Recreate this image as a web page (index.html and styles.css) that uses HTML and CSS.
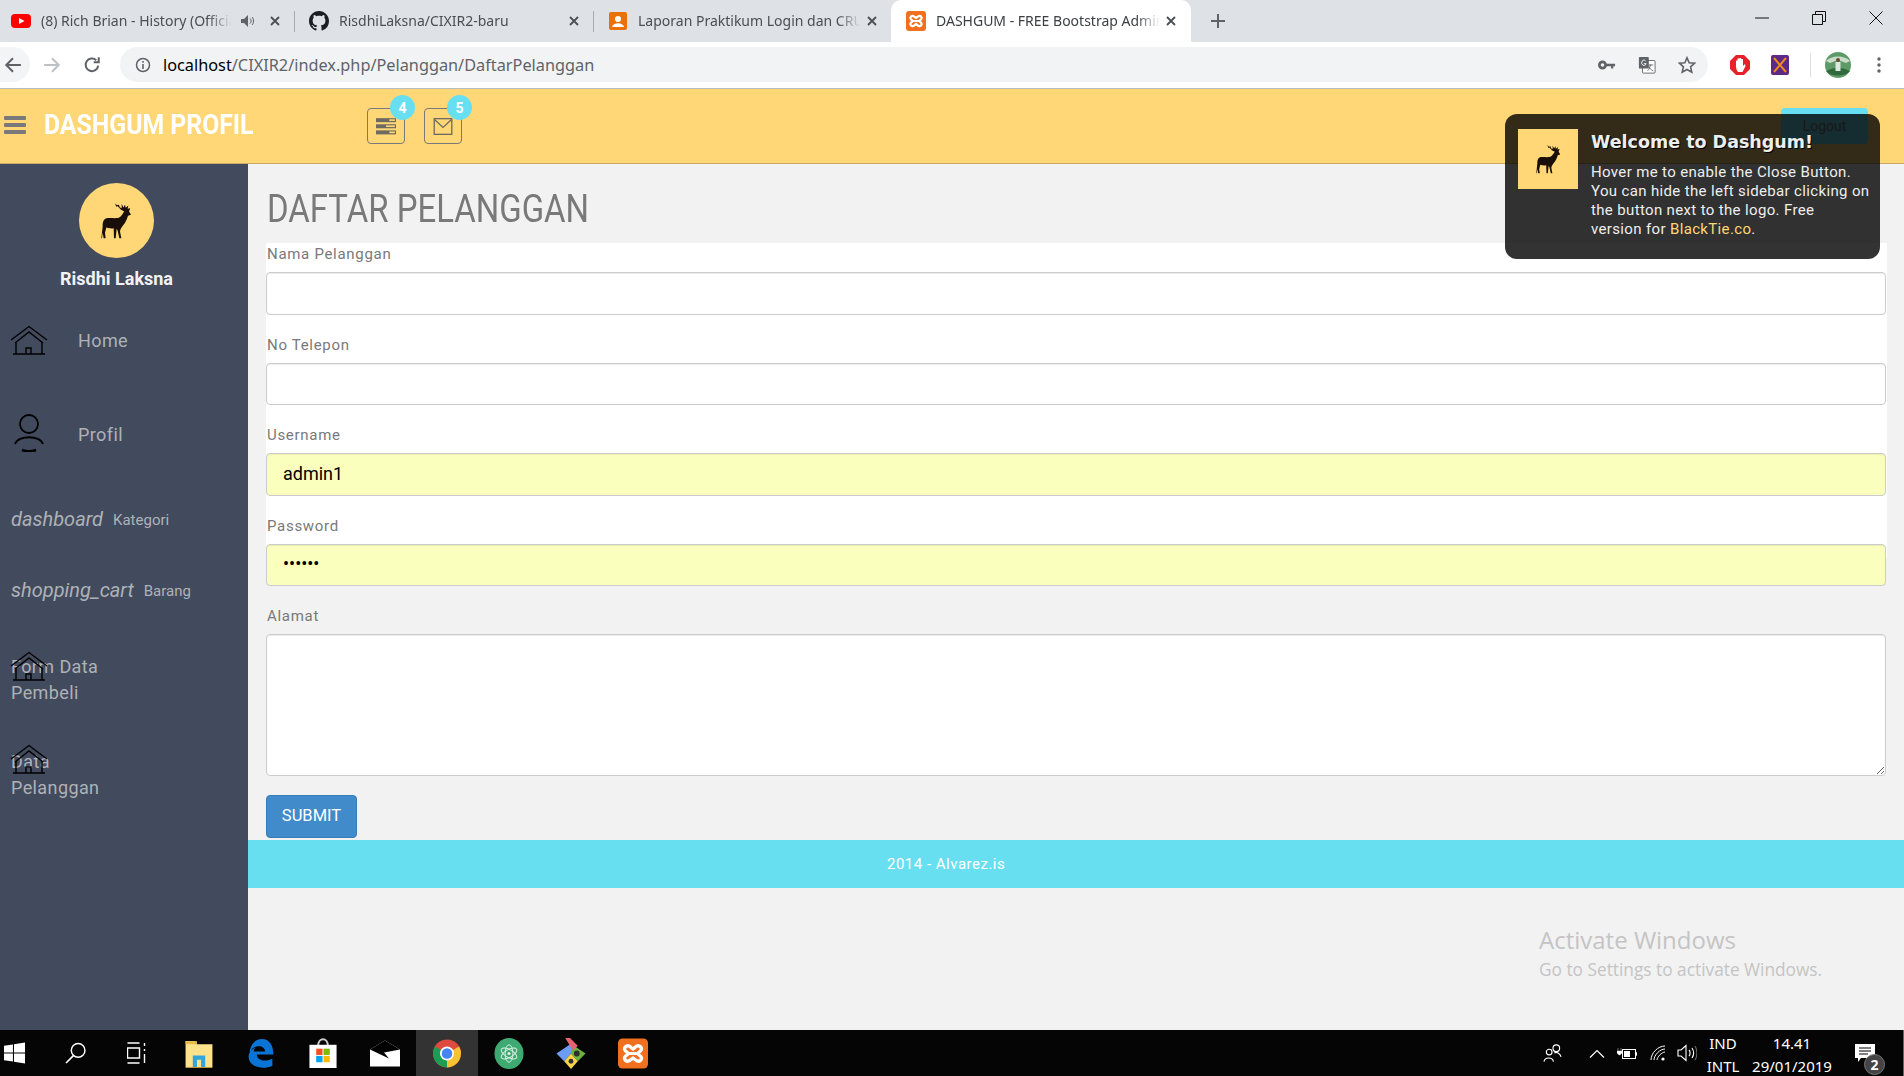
FILE: index.html
```html
<!DOCTYPE html>
<html lang="id">
<head>
    <meta charset="UTF-8">
    <title>DASHGUM - FREE Bootstrap Admin Template</title>
    <link rel="stylesheet" href="styles.css">
</head>
<body>
    <svg class="defs" width="0" height="0">
        <symbol id="deer" viewBox="0 0 93 110">
            <path d="M5 72C4 60 8 50 17 48C32 46 48 52 58 44C64 38 66 32 70 28L60 23L50 12L46 14L42 3L48 9L54 8L56 15L62 18L62 5L67 16L72 8L74 17L82 10L80 20L88 18L84 27L90 38L81 41C78 50 74 62 66 70C60 78 58 82 57 88L61 108H55L50 86L47 80L44 108H39L38 78C30 80 22 78 16 76L12 92L14 108H8L5 92L3 108H1Z" fill="#1a0e08"/>
        </symbol>
        <symbol id="house" viewBox="0 0 38 30">
            <path d="M1 15L19 1.500L37 15M5 18L19 7L33 18M6 17V29H32V17M3 29H35M16 29V23H21V29" fill="none" stroke="#000" stroke-width="1.400"/>
        </symbol>
        <symbol id="xampp" viewBox="0 0 20 20">
            <rect width="20" height="20" rx="3" fill="#f0701f"/>
            <path d="M5 5.500C7 3.500 8.500 6 10 7C11.500 6 13 3.500 15 5.500C17 7.500 14 9 13 10C14 11 17 12.500 15 14.500C13 16.500 11.500 14 10 13C8.500 14 7 16.500 5 14.500C3 12.500 6 11 7 10C6 9 3 7.500 5 5.500Z" fill="none" stroke="#fff" stroke-width="2.200"/>
            <path d="M7 10H13" stroke="#fff" stroke-width="2"/>
        </symbol>
    </svg>

    <!-- browser -->
    <div class="tabstrip">
        <div class="tab tab-first">
            <svg class="favicon" viewBox="0 0 20 20"><rect y="3" width="20" height="14" rx="4" fill="#f00"/><path d="M8 7L13.500 10L8 13Z" fill="#fff"/></svg>
            <span class="tab-title">(8) Rich Brian - History (Official Music Video)</span>
            <svg class="speaker" viewBox="0 0 14 12"><path d="M0 4H3L7 0V12L3 8H0Z" fill="#5f6368"/><path d="M9 3.500C10.500 5 10.500 7 9 8.500M11 2C13 4 13 8 11 10" fill="none" stroke="#5f6368"/></svg>
            <svg class="tab-close" viewBox="0 0 10 10"><path d="M1 1L9 9M9 1L1 9"/></svg>
        </div>
        <div class="tab">
            <svg class="favicon" viewBox="0 0 16 16"><path fill="#1b1f23" d="M8 0C3.580 0 0 3.580 0 8c0 3.540 2.290 6.530 5.470 7.590.4.070.55-.17.55-.38 0-.19-.01-.82-.01-1.490-2.010.37-2.530-.49-2.690-.94-.09-.23-.48-.94-.82-1.130-.28-.15-.68-.52-.01-.53.63-.01 1.080.58 1.230.82.72 1.210 1.870.87 2.330.66.070-.52.28-.87.51-1.070-1.780-.2-3.640-.89-3.640-3.950 0-.87.31-1.590.82-2.150-.08-.2-.36-1.020.08-2.120 0 0 .67-.21 2.200.82.64-.18 1.320-.27 2-.27.68 0 1.360.09 2 .27 1.530-1.040 2.200-.82 2.200-.82.44 1.100.16 1.920.08 2.120.51.56.82 1.270.82 2.150 0 3.070-1.870 3.750-3.650 3.950.29.25.54.73.54 1.480 0 1.070-.01 1.930-.01 2.200 0 .21.15.46.55.38A8.013 8.013 0 0016 8c0-4.420-3.580-8-8-8z"/></svg>
            <span class="tab-title">RisdhiLaksna/CIXIR2-baru</span>
            <svg class="tab-close" viewBox="0 0 10 10"><path d="M1 1L9 9M9 1L1 9"/></svg>
        </div>
        <div class="tab tab-last">
            <svg class="favicon" viewBox="0 0 20 20"><rect x="1" y="1" width="18" height="18" rx="2" fill="#e8710a"/><circle cx="10" cy="8" r="3" fill="#fff"/><path d="M4 16C5 11 15 11 16 16Z" fill="#fff"/></svg>
            <span class="tab-title">Laporan Praktikum Login dan CRUD</span>
            <svg class="tab-close" viewBox="0 0 10 10"><path d="M1 1L9 9M9 1L1 9"/></svg>
        </div>
        <div class="tab tab-active">
            <svg class="favicon"><use href="#xampp"/></svg>
            <span class="tab-title">DASHGUM - FREE Bootstrap Admin Template</span>
            <svg class="tab-close" viewBox="0 0 10 10"><path d="M1 1L9 9M9 1L1 9"/></svg>
        </div>
        <svg class="new-tab" viewBox="0 0 14 14"><path d="M7 0V14M0 7H14"/></svg>
        <div class="win-controls">
            <svg viewBox="0 0 14 14"><path d="M0 7H14"/></svg>
            <svg viewBox="0 0 14 14"><path d="M.5 3.500H10.500V13.500H.5ZM3.500 3.500V.5H13.500V10.500H10.500"/></svg>
            <svg viewBox="0 0 14 14"><path d="M.5 .5L13.500 13.500M13.500 .5L.5 13.500"/></svg>
        </div>
    </div>
    <div class="toolbar">
        <span class="nav-btn nav-back"><svg viewBox="0 0 16 16"><path d="M15 8H2M8 2L2 8L8 14"/></svg></span>
        <span class="nav-btn nav-off"><svg viewBox="0 0 16 16"><path d="M1 8H14M8 2L14 8L8 14"/></svg></span>
        <span class="nav-btn"><svg viewBox="0 0 16 16"><path d="M13.500 8.500A5.600 5.600 0 1 1 11.800 3.800M14 1V5.500H9.500" /></svg></span>
        <div class="omnibox">
            <svg class="info" viewBox="0 0 16 16"><circle cx="8" cy="8" r="6.500" fill="none" stroke="#5f6368" stroke-width="1.500"/><path d="M8 7V12M8 4V5.800" stroke="#5f6368" stroke-width="1.600"/></svg>
            <span class="url"><b>localhost</b>/CIXIR2/index.php/Pelanggan/DaftarPelanggan</span>
            <svg class="omni-icon" viewBox="0 0 20 12"><circle cx="5" cy="6" r="3.500" fill="none" stroke="#5f6368" stroke-width="3"/><path d="M8 4.500H19V7.500H17V10H14.500V7.500H8Z" fill="#5f6368"/></svg>
            <svg class="omni-icon" viewBox="0 0 20 20"><rect x="5" y="5" width="14" height="14" rx="1" fill="#fff" stroke="#5f6368"/><rect x="1" y="1" width="11" height="13" rx="1" fill="#5f6368"/><path d="M8.500 5.500A2.500 3 0 1 0 9 8.500H6.500" fill="none" stroke="#fff"/><path d="M11 10H17M14 9.500C13.500 12 12.500 15 10.500 16.500M12 11.500C13 14 14.500 15.500 17 16.500" fill="none" stroke="#5f6368"/></svg>
            <svg class="omni-icon" viewBox="0 0 20 20"><path d="M10 2L12.400 7.500L18.500 8L14 12L15.300 18L10 15L4.700 18L6 12L1.500 8L7.600 7.500Z" fill="none" stroke="#5f6368" stroke-width="1.800"/></svg>
        </div>
        <div class="extensions">
            <svg class="ext-stop" viewBox="0 0 20 20"><path d="M6 0H14L20 6V14L14 20H6L0 14V6Z" fill="#e8202a"/><path d="M6 10V5.500H7.500V9.500V3.500H9.500V9V3H11V9V4H13V11L15 9L15.500 11L12.500 17H8C6.500 15 6 13 6 10Z" fill="#fff"/></svg>
            <svg class="ext-purple" viewBox="0 0 18 20"><rect width="18" height="20" rx="2" fill="#5c2a86"/><path d="M3 3L15 17M15 3L3 17" stroke="#f08a1d" stroke-width="2"/></svg>
            <span class="ext-sep"></span>
            <svg class="ext-avatar" viewBox="0 0 26 26"><circle cx="13" cy="13" r="13" fill="#5d9a68"/><path d="M1 9C6 3 20 3 25 9L21 11L13 8L5 11Z" fill="#c9dcc9"/><path d="M1 19C8 15 18 15 25 19C21 25 5 25 1 19Z" fill="#2f6a3c"/><path d="M10.500 10H15.500V19H10.500Z" fill="#dfe8e0"/><circle cx="13" cy="8" r="2" fill="#6b4a36"/></svg>
            <svg class="ext-menu" viewBox="0 0 4 16"><circle cx="2" cy="2" r="1.700"/><circle cx="2" cy="8" r="1.700"/><circle cx="2" cy="14" r="1.700"/></svg>
        </div>
    </div>

    <!-- page -->
    <header class="topbar">
        <div class="burger"><i></i><i></i><i></i></div>
        <a class="logo">DASHGUM PROFIL</a>
        <div class="top-menu">
            <span class="top-btn">
                <svg viewBox="0 0 18 15"><rect width="18" height="3.600" fill="#6f6a60"/><rect y="5.500" width="18" height="3.600" fill="#6f6a60"/><rect y="11" width="18" height="3.600" fill="#6f6a60"/><rect x="12" y="1" width="5" height="1.500" fill="#ffd777"/><rect x="9" y="6.500" width="8" height="1.500" fill="#ffd777"/><rect x="12" y="12" width="5" height="1.500" fill="#ffd777"/></svg>
                <span class="badge">4</span>
            </span>
            <span class="top-btn">
                <svg viewBox="0 0 20 18"><rect x=".7" y=".7" width="18.600" height="16.600" fill="none" stroke="#6f6a60" stroke-width="1.400"/><path d="M1 1.500L10 10L19 1.500" fill="none" stroke="#6f6a60" stroke-width="1.400"/></svg>
                <span class="badge">5</span>
            </span>
        </div>
        <a class="logout">Logout</a>
    </header>

    <div class="wrap">
        <aside class="sidebar">
            <div class="avatar"><svg><use href="#deer"/></svg></div>
            <h5 class="user-name">Risdhi Laksna</h5>
            <ul class="menu">
                <li class="menu-icon"><svg class="ico-house"><use href="#house"/></svg><span>Home</span></li>
                <li class="menu-icon"><svg class="ico-user" viewBox="0 0 30 38"><circle cx="15" cy="10" r="9" fill="none" stroke="#000" stroke-width="1.800"/><path d="M1 30C4 21 26 21 29 30" fill="none" stroke="#000" stroke-width="1.800"/><path d="M8 36C12 37.500 18 37.500 22 36" fill="none" stroke="#000" stroke-width="2.500"/></svg><span>Profil</span></li>
                <li class="menu-text"><em>dashboard</em><small>Kategori</small></li>
                <li class="menu-text"><em>shopping_cart</em><small>Barang</small></li>
                <li class="menu-wrap"><svg class="ico-over"><use href="#house"/></svg>Form Data Pembeli</li>
                <li class="menu-wrap menu-data"><svg class="ico-over"><use href="#house"/></svg>Data Pelanggan</li>
            </ul>
        </aside>

        <main class="content">
            <h3 class="page-title">DAFTAR PELANGGAN</h3>
            <form class="form-panel">
                <div class="form-group">
                    <label>Nama Pelanggan</label>
                    <input class="form-control" type="text">
                </div>
                <div class="form-group">
                    <label>No Telepon</label>
                    <input class="form-control" type="text">
                </div>
                <div class="form-group">
                    <label>Username</label>
                    <input class="form-control filled" type="text" value="admin1">
                </div>
                <div class="form-group">
                    <label>Password</label>
                    <input class="form-control filled" type="password" value="123456">
                </div>
                <div class="form-group">
                    <label>Alamat</label>
                    <textarea class="form-control area"></textarea>
                </div>
                <button class="btn-submit" type="button">SUBMIT</button>
            </form>
            <footer class="site-footer">2014 - Alvarez.is</footer>
            <div class="activate">
                <div class="activate-big">Activate Windows</div>
                <div>Go to Settings to activate Windows.</div>
            </div>
        </main>
    </div>

    <!-- notifikasi -->
    <div class="gritter">
        <div class="gritter-img"><svg><use href="#deer"/></svg></div>
        <div class="gritter-body">
            <div class="gritter-title">Welcome to Dashgum!</div>
            <p>Hover me to enable the Close Button. You can hide the left sidebar clicking on the button next to the logo. Free<br>version for <a>BlackTie.co</a>.</p>
        </div>
    </div>

    <!-- windows -->
    <div class="taskbar">
        <span class="task task-start"><svg viewBox="0 0 20 20"><path d="M0 3L8.500 1.800V9.500H0ZM9.500 1.600L20 0V9.500H9.500ZM0 10.500H8.500V18.200L0 17ZM9.500 10.500H20V20L9.500 18.400Z" fill="#fff"/></svg></span>
        <span class="task"><svg viewBox="0 0 20 20"><circle cx="12.500" cy="7.500" r="6.500" fill="none" stroke="#fff" stroke-width="1.400"/><path d="M8 12.500L1 19.500" stroke="#fff" stroke-width="1.600"/></svg></span>
        <span class="task"><svg viewBox="0 0 20 22"><path d="M0 1H12M0 6H12V16H0ZM0 21H12M17 1V4M17 7V9M17 12V21" fill="none" stroke="#fff" stroke-width="1.400"/></svg></span>
        <span class="task"><svg class="big" viewBox="0 0 28 30"><path d="M1 3H10L12 6H27V28H1Z" fill="#ffe38c"/><path d="M1 3H12V6H1Z" fill="#e8bb4d"/><path d="M8 28V17H20V28H16V21H12V28Z" fill="#2fa6de"/><path d="M1 28H27V29H1Z" fill="#c89a35"/></svg></span>
        <span class="task"><svg class="big" viewBox="0 0 26 30"><path d="M2 15C2 7 7 1 14 1C21 1 25 7 25 16H9C9 21 15 24 24 20V27C14 31 1 28 1 18C1 14 4 11 8 9C7 10 6 11 6 13H17C17 8 10 6 5 10C4 11 3 13 2 15Z" fill="#0a74d6"/></svg></span>
        <span class="task"><svg class="big" viewBox="0 0 30 32"><path d="M10 8C10 -1 20 -1 20 8" fill="none" stroke="#ccc" stroke-width="2"/><path d="M1 7H29V31H1Z" fill="#fff"/><rect x="8" y="11" width="6.500" height="6.500" fill="#f25022"/><rect x="15.500" y="11" width="6.500" height="6.500" fill="#7fba00"/><rect x="8" y="18.500" width="6.500" height="6.500" fill="#00a4ef"/><rect x="15.500" y="18.500" width="6.500" height="6.500" fill="#ffb900"/></svg></span>
        <span class="task"><svg class="big" viewBox="0 0 30 30"><path d="M0 11L15 2L30 11V28H0Z" fill="#fff"/><path d="M0 11L19 20L14 14L30 11L15 2Z" fill="#000"/></svg></span>
        <span class="task task-on"><svg class="big" viewBox="0 0 30 30"><circle cx="15" cy="15" r="14" fill="#dd4b3e"/><path d="M15 15L27.100 8A14 14 0 0 1 15 29Z" fill="#f7c330"/><path d="M15 15L15 29A14 14 0 0 1 2.900 8Z" fill="#1a9e54"/><circle cx="15" cy="15" r="7" fill="#fff"/><circle cx="15" cy="15" r="5.300" fill="#4385f4"/></svg></span>
        <span class="task"><svg class="big" viewBox="0 0 30 32"><ellipse cx="15" cy="16" rx="15" ry="16" fill="#3eaa72"/><g fill="none" stroke="#d8f2e4" stroke-width="1"><ellipse cx="15" cy="16" rx="9" ry="4" transform="rotate(30 15 16)"/><ellipse cx="15" cy="16" rx="9" ry="4" transform="rotate(-30 15 16)"/><ellipse cx="15" cy="16" rx="9" ry="4" transform="rotate(90 15 16)"/></g><circle cx="15" cy="16" r="1.600" fill="#d8f2e4"/></svg></span>
        <span class="task"><svg class="big" viewBox="0 0 30 32"><path d="M15 6L30 16L22 24L15 16Z" fill="#69b33d"/><path d="M15 6L0 16L8 24L15 16Z" fill="#6c9cf4"/><path d="M8 24L15 32L22 24L15 16Z" fill="#f7d44c"/><path d="M9 0L14 0L22 8L17 13Z" fill="#e8636f"/><circle cx="21" cy="16" r="3" fill="#2f2f2f"/><circle cx="15" cy="24" r="2.500" fill="#2f2f2f"/></svg></span>
        <span class="task"><svg class="big"><use href="#xampp"/></svg></span>
        <div class="tray">
            <svg class="tray-people" viewBox="0 0 20 20"><circle cx="14" cy="5" r="3.500" fill="none" stroke="#fff" stroke-width="1.200"/><circle cx="6.500" cy="9" r="3" fill="none" stroke="#fff" stroke-width="1.200"/><path d="M1 19C2 14 10 14 11 19M12 10C14 8.500 18 10 19 14" fill="none" stroke="#fff" stroke-width="1.200"/></svg>
            <svg class="tray-chevron" viewBox="0 0 16 9"><path d="M1 8.500L8 1.500L15 8.500" fill="none" stroke="#fff" stroke-width="1.200"/></svg>
            <svg class="tray-battery" viewBox="0 0 20 13"><rect x="5.500" y="2.500" width="13" height="9" fill="none" stroke="#fff"/><rect x="7" y="4" width="6" height="6" fill="#fff"/><path d="M19 5.500H20V8.500H19M1 1V4M4 1V4M0 4H5V6L3 8H2L0 6Z" fill="#fff" stroke="#fff" stroke-width=".4"/></svg>
            <svg class="tray-wifi" viewBox="0 0 16 16"><path d="M1 15C1 8 8 1 15 1M4 15C4 10 10 4 15 4M7 15C7 12 12 7 15 7" fill="none" stroke="#fff" stroke-width="1"/><circle cx="13" cy="14" r="1.600" fill="#fff"/></svg>
            <svg class="tray-volume" viewBox="0 0 20 18"><path d="M1 6H4L9 1.500V16.500L4 12H1Z" fill="none" stroke="#fff" stroke-width="1.100"/><path d="M12 6C13.500 7.500 13.500 10.500 12 12M15 4C17 7 17 11 15 14" fill="none" stroke="#fff" stroke-width="1.100"/><path d="M18 2C20.500 6 20.500 12 18 16" fill="none" stroke="#666" stroke-width="1.100"/></svg>
            <div class="tray-lang"><span>IND</span><span>INTL</span></div>
            <div class="tray-clock"><span>14.41</span><span>29/01/2019</span></div>
            <span class="tray-note">
                <svg viewBox="0 0 20 18"><path d="M0 0H20V14H6L3 18V14H0Z" fill="#fff"/><path d="M4 4H16M4 7H16M4 10H13" stroke="#000"/></svg>
                <span class="note-count">2</span>
            </span>
        </div>
    </div>
</body>
</html>
```

FILE: styles.css
```css
* {
    box-sizing: border-box;
}

body {
    margin: 0;
    width: 1904px;
    height: 1076px;
    overflow: hidden;
    display: flex;
    flex-direction: column;
    position: relative;
    background-color: #f2f2f2;
    font-family: "Roboto", "Liberation Sans", sans-serif;
    color: #797979;
}

.defs {
    position: absolute;
}

/* Chrome */
.tabstrip {
    height: 42px;
    flex: none;
    background-color: #dee1e6;
    display: flex;
    align-items: center;
    font-family: "Noto Sans", sans-serif;
    font-size: 14px;
    color: #4b4e52;
}

.tab {
    width: 299px;
    height: 42px;
    padding: 0 15px 0 14px;
    display: flex;
    align-items: center;
    position: relative;
}

.tab::after {
    content: "";
    position: absolute;
    right: 0;
    top: 11px;
    width: 1px;
    height: 21px;
    background-color: #a9acb0;
}

.tab-first {
    width: 295px;
    padding-left: 11px;
}

.tab-last {
    width: 297px;
    padding-left: 14px;
    padding-right: 14px;
}

.tab-last::after,
.tab-active::after {
    display: none;
}

.tab-active {
    width: 300px;
    background-color: #fff;
    border-radius: 10px 10px 0 0;
    color: #3c4043;
    padding-left: 15px;
    padding-right: 15px;
}

.favicon {
    width: 20px;
    height: 20px;
    flex: none;
    margin-right: 10px;
}

.tab-title {
    flex: 1;
    padding-bottom: 2px;
    white-space: nowrap;
    overflow: hidden;
    -webkit-mask-image: linear-gradient(to left, transparent, #000 24px);
    mask-image: linear-gradient(to left, transparent, #000 24px);
}

.speaker {
    width: 14px;
    height: 12px;
    flex: none;
    margin: 0 9px 0 9px;
}

.tab-close {
    width: 10px;
    height: 10px;
    flex: none;
    margin-left: 6px;
}

.tab-close path {
    stroke: #4b4e52;
    stroke-width: 1.800;
    fill: none;
}

.new-tab {
    width: 14px;
    height: 14px;
    margin-left: 20px;
}

.new-tab path {
    stroke: #5f6368;
    stroke-width: 2;
}

.win-controls {
    margin-left: auto;
    display: flex;
    gap: 43px;
    padding: 0 21px 6px 0;
}

.win-controls svg {
    width: 14px;
    height: 14px;
}

.win-controls path {
    fill: none;
    stroke: #111;
    stroke-width: 1;
}

.toolbar {
    height: 47px;
    flex: none;
    background-color: #fff;
    border-bottom: 1px solid #b9bbbf;
    display: flex;
    align-items: center;
    padding-bottom: 1px;
}

.nav-btn {
    width: 40px;
    height: 35px;
    flex: none;
    display: flex;
    align-items: center;
    justify-content: center;
}

.nav-btn svg {
    width: 18px;
    height: 18px;
    fill: none;
    stroke: #5f6368;
    stroke-width: 1.800;
}

.nav-back {
    width: 30px;
    padding-right: 4px;
    background-color: #f3f4f5;
    border-radius: 0 18px 18px 0;
}

.nav-off {
    margin-left: 2px;
}

.nav-off svg {
    stroke: #bdc1c6;
}

.omnibox {
    width: 1588px;
    height: 35px;
    flex: none;
    margin-left: 8px;
    background-color: #f1f3f4;
    border-radius: 18px;
    display: flex;
    align-items: center;
    padding: 0 12px 0 15px;
}

.info {
    width: 16px;
    height: 16px;
    flex: none;
}

.url {
    margin-left: 12px;
    margin-right: auto;
    font-family: "Noto Sans", sans-serif;
    font-size: 16.300px;
    color: #5f6368;
    white-space: nowrap;
}

.url b {
    font-weight: 400;
    color: #000;
}

.omni-icon {
    width: 18px;
    height: 18px;
    flex: none;
    margin-left: 22px;
}

.extensions {
    display: flex;
    align-items: center;
    flex: 1;
    padding-left: 22px;
}

.ext-stop {
    width: 20px;
    height: 20px;
}

.ext-purple {
    width: 18px;
    height: 20px;
    margin-left: 21px;
}

.ext-sep {
    width: 1px;
    height: 24px;
    background-color: #dadce0;
    margin-left: 21px;
}

.ext-avatar {
    width: 26px;
    height: 26px;
    margin-left: 14px;
}

.ext-menu {
    width: 4px;
    height: 16px;
    margin-left: 26px;
    fill: #5f6368;
}

/* Header */
.topbar {
    height: 75px;
    flex: none;
    background-color: #ffd777;
    border-bottom: 1px solid #c9ab66;
    display: flex;
    align-items: center;
    padding-bottom: 3px;
    position: relative;
}

.burger {
    width: 22px;
    margin-left: 4px;
    display: flex;
    flex-direction: column;
    gap: 3px;
}

.burger i {
    height: 4px;
    background-color: #797979;
    border-radius: 1px;
}

.logo {
    width: 209px;
    margin-left: 18px;
    font-size: 28px;
    font-weight: 700;
    color: #fff;
    white-space: nowrap;
    transform: scaleX(0.885);
    transform-origin: left center;
}

.top-menu {
    margin-left: 114px;
    display: flex;
    gap: 19px;
    padding-top: 3px;
}

.top-btn {
    width: 38px;
    height: 36px;
    border: 1px solid #797979;
    border-radius: 4px;
    display: flex;
    align-items: center;
    justify-content: center;
    position: relative;
}

.top-btn svg {
    width: 20px;
    height: 17px;
}

.badge {
    position: absolute;
    top: -14px;
    right: -11px;
    width: 25px;
    height: 25px;
    border-radius: 50%;
    background-color: #68dff0;
    color: #fff;
    font-size: 14px;
    font-weight: 700;
    display: flex;
    align-items: center;
    justify-content: center;
}

.logout {
    margin-left: auto;
    margin-right: 36px;
    margin-top: 3px;
    width: 87px;
    height: 36px;
    border-radius: 4px;
    background-color: #68dff0;
    color: #797979;
    font-size: 14px;
    display: flex;
    align-items: center;
    justify-content: center;
}

/* Layout */
.wrap {
    flex: 1;
    min-height: 0;
    display: flex;
}

.sidebar {
    width: 248px;
    flex: none;
    background-color: #424a5d;
    padding-top: 19px;
    color: #aeb2b7;
}

.avatar {
    width: 75px;
    height: 75px;
    margin-left: 79px;
    border-radius: 50%;
    background-color: #ffd777;
    display: flex;
    align-items: center;
    justify-content: center;
}

.avatar svg {
    width: 31px;
    height: 37px;
}

.user-name {
    width: 233px;
    margin: 10px 0 0;
    height: 48px;
    line-height: 22px;
    text-align: center;
    color: #f2f2f2;
    font-size: 18px;
    font-weight: 700;
}

.menu {
    list-style-type: none;
    margin: 0;
    padding: 0;
    display: grid;
    grid-template-rows: 94px 85px 71px 88px 95px auto;
    font-size: 18px;
    letter-spacing: 0.4px;
}

.menu li {
    position: relative;
}

.menu-icon {
    height: 48px;
    display: flex;
    align-items: center;
}

.menu-icon span {
    margin-left: 78px;
}

.ico-house,
.ico-over {
    width: 38px;
    height: 30px;
    position: absolute;
    left: 10px;
    top: 9px;
}

.ico-user {
    width: 30px;
    height: 38px;
    position: absolute;
    left: 14px;
    top: 4px;
}

.menu-text {
    height: 48px;
    display: flex;
    align-items: center;
    padding-left: 11px;
    letter-spacing: 0;
}

.menu-text em {
    font-size: 20px;
}

.menu-text small {
    margin-left: 10px;
    font-size: 15px;
    padding-top: 2px;
}

.menu-wrap {
    width: 120px;
    padding-left: 11px;
    line-height: 26px;
}

.ico-over {
    top: -3px;
}

.menu-data .ico-over {
    top: -5px;
}

/* Konten */
.content {
    flex: 1;
    min-width: 0;
    position: relative;
}

.page-title {
    margin: 25px 0 14px 19px;
    height: 40px;
    line-height: 40px;
    font-size: 38px;
    font-weight: 400;
    white-space: nowrap;
    transform: scaleX(0.867);
    transform-origin: left center;
}

.form-panel {
    margin: 0 17px 0 18px;
    padding-right: 1px;
    background: linear-gradient(#fff 315px, transparent 315px);
}

.form-group {
    margin-bottom: 19px;
}

.form-group label {
    display: block;
    height: 21px;
    line-height: 20px;
    padding: 1px 0 0 1px;
    margin-bottom: 8px;
    font-size: 15px;
    letter-spacing: 0.7px;
}

.form-control {
    display: block;
    width: 100%;
    height: 42.500px;
    border: 1px solid #ccc;
    border-radius: 4px;
    background-color: #fff;
    padding: 0 16px 2px;
    font-family: "Roboto", sans-serif;
    font-size: 18px;
    color: #000;
    box-shadow: inset 0 1px 1px rgba(0, 0, 0, 0.075);
    outline: none;
}

.filled {
    background-color: #faffbd;
}

.area {
    height: 142px;
    resize: both;
}

.btn-submit {
    display: block;
    width: 91px;
    height: 43px;
    padding-bottom: 3px;
    background-color: #428bca;
    border: 1px solid #357ebd;
    border-radius: 4px;
    color: #fff;
    font-family: "Roboto", sans-serif;
    font-size: 16.500px;
}

.site-footer {
    margin-top: 2px;
    height: 48px;
    line-height: 48px;
    background-color: #68dff0;
    color: #fff;
    font-size: 15px;
    letter-spacing: 0.5px;
    padding-left: 639px;
}

.activate {
    position: absolute;
    left: 1291px;
    top: 759px;
    color: #c4c4c4;
    font-family: "Open Sans", sans-serif;
    font-size: 17.300px;
}

.activate-big {
    font-size: 24px;
    margin-bottom: 2px;
}

/* Notifikasi */
.gritter {
    position: absolute;
    left: 1505px;
    top: 114px;
    width: 375px;
    height: 145px;
    background-color: rgba(0, 0, 0, 0.8);
    border-radius: 12px;
    padding: 15px 9px 15px 13px;
    display: flex;
    color: #eee;
}

.gritter-img {
    width: 60px;
    height: 60px;
    flex: none;
    background-color: #ffd777;
    display: flex;
    align-items: center;
    justify-content: center;
}

.gritter-img svg {
    width: 25px;
    height: 30px;
}

.gritter-body {
    margin-left: 13px;
}

.gritter-title {
    padding-top: 1px;
    font-family: "DejaVu Sans", sans-serif;
    font-size: 17.500px;
    font-weight: 700;
    line-height: 24px;
    text-shadow: 1px 1px 0 #000;
}

.gritter-body p {
    margin: 9px 0 0;
    font-size: 15px;
    letter-spacing: 0.35px;
    line-height: 19px;
}

.gritter-body a {
    color: #ffd777;
}

/* Taskbar */
.taskbar {
    height: 46px;
    flex: none;
    background-color: #050505;
    display: flex;
    align-items: center;
    color: #fff;
    font-family: "Noto Sans", sans-serif;
    font-size: 15px;
}

.task {
    width: 62px;
    height: 46px;
    flex: none;
    display: flex;
    align-items: center;
    justify-content: center;
}

.task svg {
    width: 21px;
    height: 22px;
}

.task svg.big {
    width: 30px;
    height: 31px;
}

.task-start {
    width: 44px;
    padding-right: 16px;
}

.task-on {
    background-color: #333;
}

.tray {
    margin-left: auto;
    display: flex;
    align-items: center;
    height: 46px;
    padding-right: 5px;
    border-right: 1px solid #666;
}

.tray-people {
    width: 19px;
    height: 20px;
}

.tray-chevron {
    width: 16px;
    height: 9px;
    margin-left: 27px;
}

.tray-battery {
    width: 20px;
    height: 13px;
    margin-left: 12px;
}

.tray-wifi {
    width: 16px;
    height: 16px;
    margin-left: 13px;
}

.tray-volume {
    width: 20px;
    height: 18px;
    margin-left: 11px;
}

.tray-lang,
.tray-clock {
    display: flex;
    flex-direction: column;
    align-items: center;
    line-height: 23px;
    padding-top: 3px;
}

.tray-lang {
    margin-left: 11px;
    width: 30px;
}

.tray-clock {
    margin-left: 16px;
    width: 76px;
}

.tray-note {
    width: 20px;
    height: 18px;
    margin-left: 25px;
    margin-right: 23px;
    position: relative;
    display: block;
}

.tray-note svg {
    width: 20px;
    height: 18px;
    display: block;
}

.note-count {
    position: absolute;
    left: 9px;
    top: 10px;
    width: 21px;
    height: 21px;
    border-radius: 50%;
    background-color: #444;
    border: 1px solid #777;
    font-size: 14px;
    font-weight: 700;
    display: flex;
    align-items: center;
    justify-content: center;
}
```
